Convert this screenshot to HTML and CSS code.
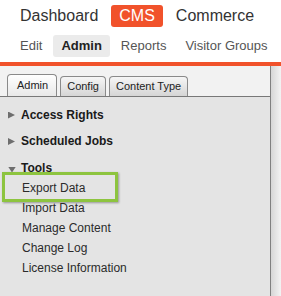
FILE: index.html
```html
<!DOCTYPE html>
<html>

<head>
    <link rel="stylesheet" href="styles.css">
</head>

<body>
    <div id="top-nav">
        <a class="nav-item">Dashboard</a>
        <a class="nav-item active">CMS</a>
        <a class="nav-item">Commerce</a>
    </div>
    <div id="sub-nav">
        <a class="sub-item">Edit</a>
        <a class="sub-item active">Admin</a>
        <a class="sub-item">Reports</a>
        <a class="sub-item">Visitor Groups</a>
    </div>
    <div id="brand-bar"></div>

    <div id="main">
        <div id="panel">
            <div id="tabs">
                <div class="tab active">Admin</div>
                <div class="tab">Config</div>
                <div class="tab">Content Type</div>
            </div>
            <div id="tree">
                <div class="group">
                    <div class="heading closed">Access Rights</div>
                </div>
                <div class="group">
                    <div class="heading closed">Scheduled Jobs</div>
                </div>
                <div class="group">
                    <div class="heading open">Tools</div>
                    <div class="item highlight">Export Data</div>
                    <div class="item">Import Data</div>
                    <div class="item">Manage Content</div>
                    <div class="item">Change Log</div>
                    <div class="item">License Information</div>
                </div>
            </div>
        </div>
        <div id="side-strip"></div>
    </div>
</body>

</html>
```

FILE: styles.css
```css
body {
    margin: 0;
    padding: 0;
    background: #fff;
    font-family: "Liberation Sans", Arial, sans-serif;
    height: 296px;
    display: flex;
    flex-direction: column;
    overflow: hidden;
}

#top-nav {
    display: flex;
    gap: 5px;
    padding: 5px 0 0 12px;
}

.nav-item {
    padding: 0 8px;
    font-size: 16px;
    line-height: 22px;
    color: #333;
    border-radius: 3px;
}

.nav-item.active {
    background: #f1522b;
    color: #fff;
}

#sub-nav {
    display: flex;
    gap: 3px;
    padding-left: 12px;
    margin-top: 8px;
}

.sub-item {
    padding: 0 8px;
    font-size: 13px;
    line-height: 22px;
    color: #555;
    border-radius: 3px;
}

.sub-item.active {
    background: #ebebeb;
    color: #222;
    font-weight: bold;
}

#brand-bar {
    margin-top: 5px;
    height: 4px;
    background: #f1522b;
}

#main {
    flex: 1;
    display: flex;
}

#panel {
    width: 270px;
    border-right: 1px solid #808080;
    display: flex;
    flex-direction: column;
    background: #e4e4e4;
}

#side-strip {
    flex: 1;
    background: linear-gradient(to right, #d6d6d6, #f3f3f3);
}

#tabs {
    display: flex;
    align-items: flex-end;
    gap: 3px;
    height: 31px;
    padding-left: 7px;
    background: #f2f2f2;
    border-bottom: 1px solid #787878;
    box-sizing: border-box;
}

.tab {
    font-size: 11px;
    line-height: 19px;
    color: #222;
    padding: 0 6px;
    border: 1px solid #8a8a8a;
    border-bottom: none;
    border-radius: 4px 4px 0 0;
    background: linear-gradient(#f6f6f6, #d5d5d5);
}

.tab.active {
    line-height: 21px;
    padding: 0 8px 0 9px;
    background: linear-gradient(#ffffff, #e8e8e8);
}

#tree {
    padding-top: 7.5px;
}

.group {
    margin-bottom: 6.5px;
}

.heading {
    position: relative;
    padding-left: 21px;
    font-size: 12px;
    font-weight: bold;
    line-height: 20px;
    color: #1a1a1a;
}

.heading::before {
    content: '';
    position: absolute;
    left: 8px;
    background: #6e6e6e;
}

.heading.closed::before {
    top: 7px;
    width: 7px;
    height: 7px;
    clip-path: polygon(0 0, 100% 50%, 0 100%);
}

.heading.open::before {
    top: 9px;
    width: 8px;
    height: 6px;
    clip-path: polygon(0 0, 100% 0, 50% 100%);
}

.item {
    position: relative;
    padding-left: 22px;
    font-size: 12px;
    line-height: 20px;
    color: #2b2b2b;
}

.highlight::after {
    content: '';
    position: absolute;
    left: 2px;
    top: -6px;
    width: 110px;
    height: 24px;
    border: 3px solid #8dc43f;
    box-shadow: 1px 1px 2px rgba(0, 0, 0, 0.35);
}
```
